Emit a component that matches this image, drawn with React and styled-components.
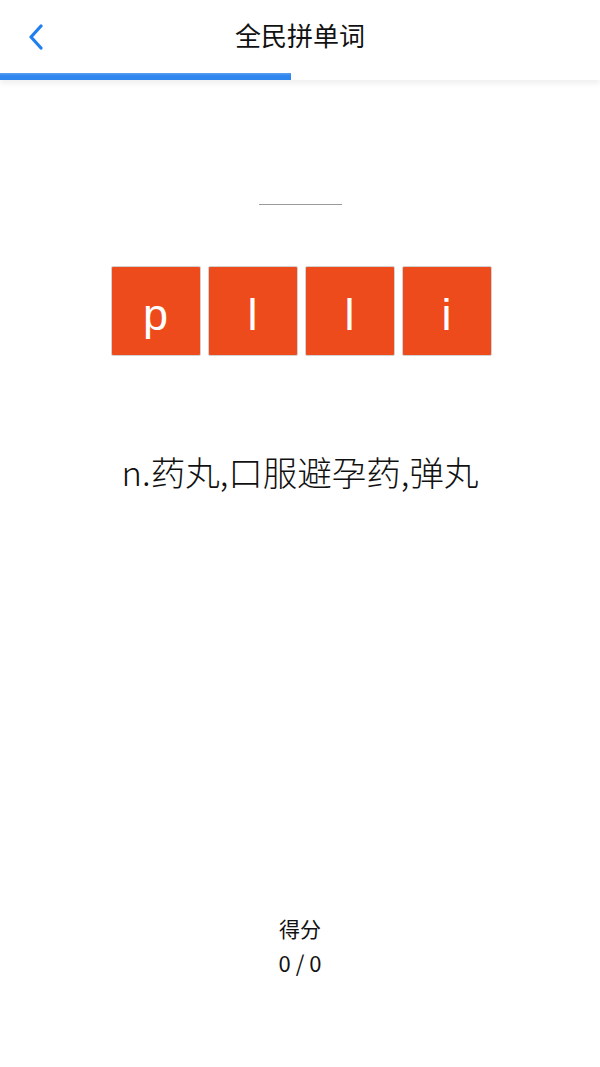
import styled, { createGlobalStyle } from 'styled-components'

const C = {
  blue: '#1f7ff0', bar: '#2f86ee', tile: '#ee4b1d', text: '#111', line: '#9a9a9a',
}

const Global = createGlobalStyle`
  html, body { margin:0; padding:0; background:#fff; }
  body { font-family:'Liberation Sans','Noto Sans CJK SC',sans-serif; color:${C.text}; }
`

const Page = styled.div`
  min-height:100vh; display:flex; flex-direction:column; background:#fff;
`
const Header = styled.header`
  height:73px; box-sizing:border-box; padding-bottom:4px;
  display:flex; align-items:center; justify-content:center;
  position:relative; background:#fff;
`
const BackBtn = styled.button`
  position:absolute; left:21px; top:22px; width:30px; height:30px;
  background:none; border:none; padding:0; cursor:pointer;
  display:flex; align-items:center; justify-content:center;
`
const Title = styled.h1`
  margin:0; font-size:26px; font-weight:400; color:#111;
  font-family:'Noto Sans CJK SC',sans-serif;
`
const Track = styled.div`
  height:7px; background:#fff; box-shadow:0 3px 6px rgba(0,0,0,0.08);
`
const Fill = styled.div`
  height:100%; background:linear-gradient(#5aa0f2, ${C.bar} 40%);
`
const Body = styled.main`
  flex:1; display:flex; flex-direction:column; align-items:center;
  padding-top:124px;
`
const Blank = styled.div`
  width:83px; height:1px; background:${C.line};
`
const Tiles = styled.div`
  display:flex; gap:7px; margin-top:61px; padding-left:2px;
`
const Tile = styled.div`
  width:90px; height:90px; box-sizing:border-box;
  background:${C.tile}; border:1px solid #d2d2d2; border-radius:2px;
  display:flex; align-items:center; justify-content:center;
  color:#fff; font-size:45px; line-height:1; font-family:'Liberation Sans',sans-serif; font-weight:400;
`
const Letter = styled.span`
  display:block; margin-top:6px;
`
const Meaning = styled.p`
  margin:91px 0 0; font-size:34.5px; line-height:48px; font-weight:300;
  font-family:'Noto Sans CJK SC',sans-serif; color:#111;
`
const Score = styled.footer`
  margin-top:auto; padding-bottom:90px; display:flex; flex-direction:column; align-items:center;
  gap:4px; font-family:'Noto Sans CJK SC',sans-serif; color:#111;
`
const ScoreLabel = styled.div`font-size:21px; line-height:30px;`
const ScoreValue = styled.div`font-size:22px; line-height:30px;`

export default function App() {
  const letters = ['p', 'l', 'l', 'i']
  const progress = 48.5
  return (
    <Page>
      <Global />
      <Header>
        <BackBtn aria-label="back">
          <svg width="18" height="26" viewBox="0 0 18 26">
            <path d="M14 2 L4 13 L14 24" fill="none" stroke={C.blue} strokeWidth="3.2" strokeLinecap="round" strokeLinejoin="round" />
          </svg>
        </BackBtn>
        <Title>全民拼单词</Title>
      </Header>
      <Track><Fill style={{ width: `${progress}%` }} /></Track>
      <Body>
        <Blank />
        <Tiles>
          {letters.map((l, i) => <Tile key={i}><Letter>{l}</Letter></Tile>)}
        </Tiles>
        <Meaning>n.药丸,口服避孕药,弹丸</Meaning>
      </Body>
      <Score>
        <ScoreLabel>得分</ScoreLabel>
        <ScoreValue>0 / 0</ScoreValue>
      </Score>
    </Page>
  )
}
